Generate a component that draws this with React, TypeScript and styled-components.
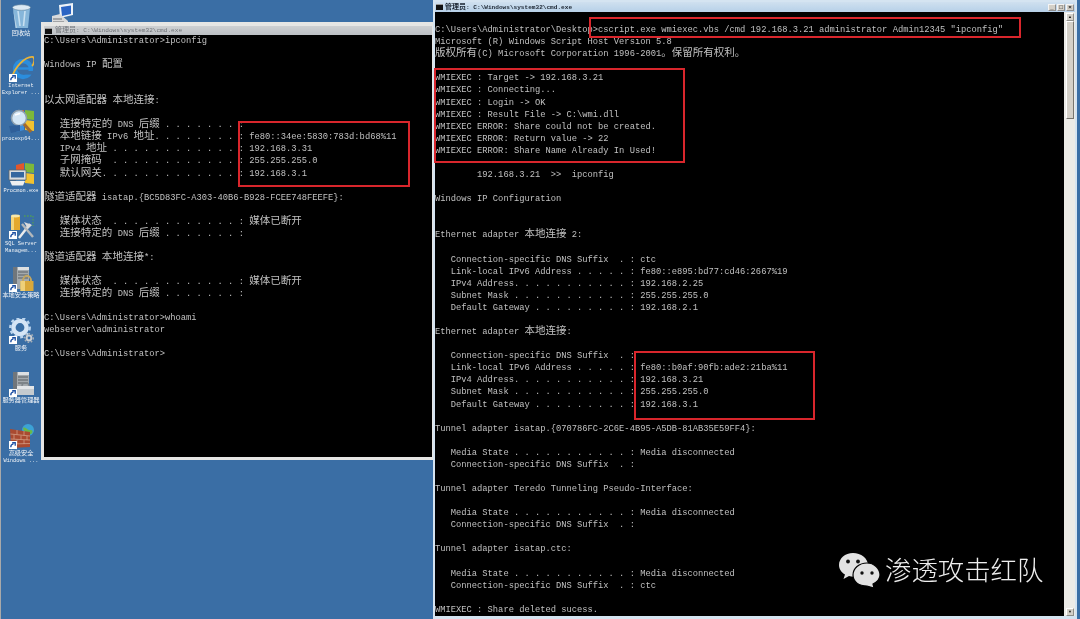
import React, { FunctionComponent, ReactNode } from 'react'
import styled, { createGlobalStyle } from 'styled-components'

const GlobalStyle = createGlobalStyle`
  html, body {
    margin: 0;
    padding: 0;
    background: #3a6ea5;
  }
`

const Desktop = styled.div`
  position: relative;
  width: 1080px;
  height: 619px;
  overflow: hidden;
  background: #3a6ea5;
  border-left: 1px solid #a9a9a9;
  box-sizing: border-box;
  filter: blur(0.3px);
`

const IconColumn = styled.div`
  display: grid;
  grid-auto-rows: 52.5px;
  width: 40px;
  padding-top: 3px;
`

const DesktopIcon = styled.div`
  display: flex;
  flex-direction: column;
  align-items: center;
`

const IconArt = styled.div`
  position: relative;
  width: 26px;
  height: 26px;
  margin-bottom: 1.5px;
`

const ShortcutBadge = styled.svg`
  position: absolute;
  left: 1px;
  bottom: 0;
  width: 8px;
  height: 8px;
`

const IconLabel = styled.div`
  height: 7px;
  color: #f2f5f8;
  font-family: 'Liberation Mono', 'Noto Sans CJK SC', monospace;
  font-size: 5.3px;
  line-height: 7px;
  text-align: center;
  white-space: pre;
`

// the cjk spans keep a small line-height so they do not push the baseline of their row
const LabelCjk = styled.span`
  display: inline-block;
  font-family: 'Noto Sans CJK SC', sans-serif;
  font-size: 6.2px;
  line-height: 4.4px;
`

const PeekIcon = styled.svg`
  position: absolute;
  left: 49px;
  top: 3px;
  width: 24px;
  height: 22px;
`

const Window = styled.div<{ $x: number; $y: number; $w: number; $h: number; $active?: boolean }>`
  position: absolute;
  left: ${(p) => p.$x}px;
  top: ${(p) => p.$y}px;
  width: ${(p) => p.$w}px;
  height: ${(p) => p.$h}px;
  box-sizing: border-box;
  display: flex;
  flex-direction: column;
  padding: ${(p) => (p.$active ? '2px 2px 3px 2px' : '4px 2px 3px 3px')};
  background: ${(p) => (p.$active ? '#d5e4f1' : '#e6e6e4')};
`

const TitleBar = styled.div<{ $active?: boolean }>`
  display: flex;
  align-items: center;
  gap: ${(p) => (p.$active ? 2 : 3)}px;
  flex: none;
  height: ${(p) => (p.$active ? 10 : 9)}px;
  padding-left: 1px;
  background: ${(p) =>
    p.$active ? 'linear-gradient(#cfe0ef, #b7d0e8)' : 'linear-gradient(#ced0d2, #bcc0c4)'};
  color: ${(p) => (p.$active ? '#1a2430' : '#6f7378')};
  font-family: 'Liberation Mono', 'Noto Sans CJK SC', monospace;
  font-size: 6.1px;
  font-weight: ${(p) => (p.$active ? 700 : 400)};
  white-space: pre;
`

const TitleCjk = styled.span`
  display: inline-block;
  font-family: 'Noto Sans CJK SC', sans-serif;
  font-size: 7px;
  line-height: 4.1px;
`

const CmdGlyph = styled.span`
  display: inline-block;
  flex: none;
  width: 7px;
  height: 6px;
  background: #111;
  border-top: 1px solid #999;
  box-sizing: border-box;
`

const Controls = styled.div`
  display: flex;
  gap: 1px;
  margin-left: auto;
  margin-right: 1px;
`

const ControlButton = styled.div`
  display: flex;
  align-items: center;
  justify-content: center;
  width: 8px;
  height: 7px;
  background: #d4d0c8;
  border: 1px solid #8d8d8d;
  border-top-color: #f4f4f4;
  border-left-color: #f4f4f4;
  box-sizing: border-box;
  color: #111;
  font-family: 'Liberation Sans', sans-serif;
  font-size: 6px;
  line-height: 1;
`

const WindowBody = styled.div`
  display: flex;
  flex: 1;
  min-height: 0;
  background: #000;
`

const Console = styled.div<{ $pitch: number }>`
  flex: 1;
  min-width: 0;
  overflow: hidden;
  color: #c0c0c0;
  font-family: 'Liberation Mono', monospace;
  font-size: 8.77px;

  > div {
    height: ${(p) => p.$pitch}px;
    line-height: ${(p) => p.$pitch}px;
    white-space: pre;
  }
`

const Wide = styled.span`
  display: inline-block;
  font-family: 'Noto Sans CJK SC', sans-serif;
  font-size: 10.52px;
  line-height: 8.6px;
`

const Scrollbar = styled.div`
  display: flex;
  flex-direction: column;
  flex: none;
  width: 11px;
  padding: 1px 1px 0 2px;
  box-sizing: border-box;
  background: #ecebe7;
`

const ScrollButton = styled.div`
  display: flex;
  align-items: center;
  justify-content: center;
  flex: none;
  height: 8px;
  background: #d4d0c8;
  border: 1px solid #8e8e8a;
  border-top-color: #fff;
  border-left-color: #fff;
  box-sizing: border-box;
  color: #111;
  font-size: 4px;
  line-height: 1;
`

const ScrollThumb = styled(ScrollButton)`
  height: 98px;
  border-bottom-color: #77756f;
  border-right-color: #77756f;
`

const ScrollTrack = styled.div`
  flex: 1;
`

const RedBox = styled.div<{ $x: number; $y: number; $w: number; $h: number }>`
  position: absolute;
  left: ${(p) => p.$x}px;
  top: ${(p) => p.$y}px;
  width: ${(p) => p.$w}px;
  height: ${(p) => p.$h}px;
  box-sizing: border-box;
  border: 2px solid #d9262c;
`

const Watermark = styled.div`
  position: absolute;
  left: 837px;
  top: 549px;
  display: flex;
  align-items: center;
  gap: 4px;
  color: #eeeeee;
  font-family: 'Noto Sans CJK SC', sans-serif;
  font-size: 26.4px;
  font-weight: 300;
  line-height: 40px;
  white-space: pre;
`

const WeChatMark = styled.svg`
  width: 43px;
  height: 37px;
  flex: none;
`

const CJK = /([\u3000-\u9fff\uff00-\uffef]+)/

const splitWide = (text: string, Tag: typeof Wide | typeof LabelCjk | typeof TitleCjk): ReactNode[] =>
  text.split(CJK).map((part, i) => (CJK.test(part) ? <Tag key={i}>{part}</Tag> : part))

const leftLines = [
  'C:\\Users\\Administrator>ipconfig',
  '',
  'Windows IP 配置',
  '',
  '',
  '以太网适配器 本地连接:',
  '',
  '   连接特定的 DNS 后缀 . . . . . . . :',
  '   本地链接 IPv6 地址. . . . . . . . : fe80::34ee:5830:783d:bd68%11',
  '   IPv4 地址 . . . . . . . . . . . . : 192.168.3.31',
  '   子网掩码  . . . . . . . . . . . . : 255.255.255.0',
  '   默认网关. . . . . . . . . . . . . : 192.168.3.1',
  '',
  '隧道适配器 isatap.{BC5D83FC-A303-40B6-B928-FCEE748FEEFE}:',
  '',
  '   媒体状态  . . . . . . . . . . . . : 媒体已断开',
  '   连接特定的 DNS 后缀 . . . . . . . :',
  '',
  '隧道适配器 本地连接*:',
  '',
  '   媒体状态  . . . . . . . . . . . . : 媒体已断开',
  '   连接特定的 DNS 后缀 . . . . . . . :',
  '',
  'C:\\Users\\Administrator>whoami',
  'webserver\\administrator',
  '',
  'C:\\Users\\Administrator>',
]

const rightLines = [
  '',
  'C:\\Users\\Administrator\\Desktop>cscript.exe wmiexec.vbs /cmd 192.168.3.21 administrator Admin12345 "ipconfig"',
  'Microsoft (R) Windows Script Host Version 5.8',
  '版权所有(C) Microsoft Corporation 1996-2001。保留所有权利。',
  '',
  'WMIEXEC : Target -> 192.168.3.21',
  'WMIEXEC : Connecting...',
  'WMIEXEC : Login -> OK',
  'WMIEXEC : Result File -> C:\\wmi.dll',
  'WMIEXEC ERROR: Share could not be created.',
  'WMIEXEC ERROR: Return value -> 22',
  'WMIEXEC ERROR: Share Name Already In Used!',
  '',
  '        192.168.3.21  >>  ipconfig',
  '',
  'Windows IP Configuration',
  '',
  '',
  'Ethernet adapter 本地连接 2:',
  '',
  '   Connection-specific DNS Suffix  . : ctc',
  '   Link-local IPv6 Address . . . . . : fe80::e895:bd77:cd46:2667%19',
  '   IPv4 Address. . . . . . . . . . . : 192.168.2.25',
  '   Subnet Mask . . . . . . . . . . . : 255.255.255.0',
  '   Default Gateway . . . . . . . . . : 192.168.2.1',
  '',
  'Ethernet adapter 本地连接:',
  '',
  '   Connection-specific DNS Suffix  . :',
  '   Link-local IPv6 Address . . . . . : fe80::b0af:90fb:ade2:21ba%11',
  '   IPv4 Address. . . . . . . . . . . : 192.168.3.21',
  '   Subnet Mask . . . . . . . . . . . : 255.255.255.0',
  '   Default Gateway . . . . . . . . . : 192.168.3.1',
  '',
  'Tunnel adapter isatap.{070786FC-2C6E-4B95-A5DB-81AB35E59FF4}:',
  '',
  '   Media State . . . . . . . . . . . : Media disconnected',
  '   Connection-specific DNS Suffix  . :',
  '',
  'Tunnel adapter Teredo Tunneling Pseudo-Interface:',
  '',
  '   Media State . . . . . . . . . . . : Media disconnected',
  '   Connection-specific DNS Suffix  . :',
  '',
  'Tunnel adapter isatap.ctc:',
  '',
  '   Media State . . . . . . . . . . . : Media disconnected',
  '   Connection-specific DNS Suffix  . : ctc',
  '',
  'WMIEXEC : Share deleted sucess.',
]

// windows flag pieces, shared by the two sysinternals icons
const Flag = () => (
  <g>
    <path d="M8 4 L16 2 L16 11 L8 12 Z" fill="#e2572b" />
    <path d="M17 2 L26 3 L26 12 L17 11 Z" fill="#7db83a" />
    <path d="M8 13 L16 12 L16 22 L8 24 Z" fill="#3f8fdd" />
    <path d="M17 12 L26 13 L26 23 L17 22 Z" fill="#f2c230" />
  </g>
)

const Tower = () => (
  <g>
    <path d="M5 1 L21 1 L21 23 L5 23 Z" fill="#a3a9ad" />
    <path d="M5 1 L9 1 L9 23 L5 23 Z" fill="#70767b" />
    <path d="M10 1 L21 1 L21 4 L10 4 Z" fill="#dde0e2" />
    <path d="M10 6 H20 M10 9 H20 M10 12 H20" stroke="#5b6065" strokeWidth="1.2" />
  </g>
)

const artwork: Record<string, ReactNode> = {
  recycle: (
    <g>
      <path d="M5 5 L22 5 L20 25 L8 25 Z" fill="#86b6da" />
      <path d="M10 8 L12 23 M17 8 L15.5 23" stroke="#c7e0f1" strokeWidth="1.6" />
      <path d="M5 5 L9 25 L7.5 25 Z" fill="#b6d2e6" />
      <ellipse cx="13.5" cy="4.5" rx="9" ry="2.8" fill="#dbe9f3" stroke="#6d8ba3" strokeWidth=".6" />
    </g>
  ),
  ie: (
    <g>
      <circle cx="15" cy="13" r="8" fill="none" stroke="#2b8ddd" strokeWidth="4.4" />
      <path d="M8 12.5 H23" stroke="#2b8ddd" strokeWidth="2.4" />
      <path d="M15 15 H25.5 V18.6 H15 Z" fill="#3a6ea5" />
      <path d="M4 22 C6 12 17 0 25 1 C27.5 3 26 8 24 10" fill="none" stroke="#e8b33a" strokeWidth="1.8" />
    </g>
  ),
  procexp: (
    <g>
      <Flag />
      <circle cx="11" cy="10" r="7.5" fill="#d3e6f5" stroke="#8fa0ae" strokeWidth="1.6" />
      <path d="M7 7 L12 5.5" stroke="#fff" strokeWidth="1.8" />
      <path d="M16 16 L23 24" stroke="#a36a2d" strokeWidth="3.2" />
      <path d="M1 18 L12 17 L12 23 L3 25 Z" fill="#2f5f99" />
    </g>
  ),
  procmon: (
    <g>
      <Flag />
      <path d="M1 9 L18 9 L18 19 L1 19 Z" fill="#d9dde0" stroke="#5f6468" strokeWidth=".8" />
      <path d="M3 11 L16 11 L16 16.5 L3 16.5 Z" fill="#35679f" />
      <path d="M2 20 L17 20 L15 24.5 L4 24.5 Z" fill="#eef0f0" />
    </g>
  ),
  sql: (
    <g>
      <path d="M3 3 H12 V17 H3 Z" fill="#e5a92c" />
      <path d="M3 3 H6 V17 H3 Z" fill="#f4d57a" />
      <ellipse cx="7.5" cy="3" rx="4.5" ry="1.4" fill="#f8e7a8" />
      <path d="M16 3 H25 M25 3 V13" stroke="#4f9a5a" strokeWidth="1.3" strokeDasharray="1.6 1.4" />
      <path d="M11 25 L22 11" stroke="#ececec" strokeWidth="2.4" />
      <path d="M14 11 L25 24" stroke="#b4b8bb" strokeWidth="2.4" />
      <path d="M16 9 L24 12 L20 16 Z" fill="#dcdcdc" />
    </g>
  ),
  security: (
    <g>
      <Tower />
      <path d="M15 15 C15 8 23 8 23 15" fill="none" stroke="#c2a661" strokeWidth="1.9" />
      <path d="M12.5 15 H25.5 V25 H12.5 Z" fill="#d9a83a" />
      <path d="M12.5 15 H17 V25 H12.5 Z" fill="#efd078" />
    </g>
  ),
  services: (
    <g>
      <circle cx="12" cy="9.5" r="6.6" fill="none" stroke="#d6e5f5" strokeWidth="4.4" />
      <circle cx="12" cy="9.5" r="9.6" fill="none" stroke="#bcd5ee" strokeWidth="2.6" strokeDasharray="3 2.9" />
      <circle cx="21" cy="20" r="2.4" fill="none" stroke="#c9ced4" strokeWidth="2" />
      <circle cx="21" cy="20" r="4.3" fill="none" stroke="#a3adb6" strokeWidth="1.6" strokeDasharray="1.6 1.6" />
    </g>
  ),
  manager: (
    <g>
      <Tower />
      <path d="M9 15 H26 V24 H9 Z" fill="#c5cbcf" />
      <path d="M9 15 H26 V18 H9 Z" fill="#e3e6e8" />
      <path d="M14 15 C14 11 21 11 21 15" fill="none" stroke="#7d8489" strokeWidth="1.4" />
    </g>
  ),
  firewall: (
    <g>
      <circle cx="20" cy="7" r="6" fill="#3ca2d6" />
      <path d="M15 5 C18 3 19 8 23 7 C25 7 25 10 23 11 C20 12 16 10 15 5" fill="#69b84a" />
      <path d="M2 6 L22 9 L22 24 L3 25 Z" fill="#a94a30" />
      <path d="M2.5 11 L22 13 M2.7 16 L22 17 M3 21 L22 20.5 M9 7 V11.5 M16 8 V12.5 M6 11.5 V16 M13 12.5 V16.5 M19 13 V17 M9 16.5 V21 M16 17 V21" stroke="#d9a88f" strokeWidth=".7" />
    </g>
  ),
}

const desktopIcons: { art: string; label: string[]; shortcut?: boolean }[] = [
  { art: 'recycle', label: ['回收站'] },
  { art: 'ie', label: ['Internet', 'Explorer ...'], shortcut: true },
  { art: 'procexp', label: ['procexp64...'] },
  { art: 'procmon', label: ['Procmon.exe'] },
  { art: 'sql', label: ['SQL Server', 'Managem...'], shortcut: true },
  { art: 'security', label: ['本地安全策略'], shortcut: true },
  { art: 'services', label: ['服务'], shortcut: true },
  { art: 'manager', label: ['服务器管理器'], shortcut: true },
  { art: 'firewall', label: ['高级安全', 'Windows ...'], shortcut: true },
]

const Shortcut = () => (
  <ShortcutBadge viewBox="0 0 9 9">
    <rect width="9" height="9" fill="#fff" />
    <path d="M2 7 C2 4 3.5 3.5 5 3.5 M3.6 2 H7 V5.4" fill="none" stroke="#1d4fa3" strokeWidth="1.5" />
  </ShortcutBadge>
)

const TerminalWindow: FunctionComponent<{
  lines: string[]
  pitch: number
  active?: boolean
  x: number
  y: number
  w: number
  h: number
  scrollbar?: boolean
}> = ({ lines, pitch, active, x, y, w, h, scrollbar }) => (
  <Window $x={x} $y={y} $w={w} $h={h} $active={active}>
    <TitleBar $active={active}>
      <CmdGlyph />
      <span>{splitWide('管理员: C:\\Windows\\system32\\cmd.exe', TitleCjk)}</span>
      {active && (
        <Controls>
          <ControlButton>_</ControlButton>
          <ControlButton>□</ControlButton>
          <ControlButton>×</ControlButton>
        </Controls>
      )}
    </TitleBar>
    <WindowBody>
      <Console $pitch={pitch}>
        {lines.map((line, i) => (
          <div key={i}>{splitWide(line, Wide)}</div>
        ))}
      </Console>
      {scrollbar && (
        <Scrollbar>
          <ScrollButton>▲</ScrollButton>
          <ScrollThumb />
          <ScrollTrack />
          <ScrollButton>▼</ScrollButton>
        </Scrollbar>
      )}
    </WindowBody>
  </Window>
)

export default function App() {
  return (
    <>
      <GlobalStyle />
      <Desktop>
        <IconColumn>
          {desktopIcons.map((icon) => (
            <DesktopIcon key={icon.art}>
              <IconArt>
                <svg viewBox="0 0 26 26" width="26" height="26">
                  {artwork[icon.art]}
                </svg>
                {icon.shortcut && <Shortcut />}
              </IconArt>
              {icon.label.map((text) => (
                <IconLabel key={text}>{splitWide(text, LabelCjk)}</IconLabel>
              ))}
            </DesktopIcon>
          ))}
        </IconColumn>
        <PeekIcon viewBox="0 0 24 22">
          <path d="M9 2 L23 0 L23 12 L10 15 Z" fill="#eef3f8" />
          <path d="M11 4 L21 2.5 L21 11 L12 13 Z" fill="#2a64c4" />
          <path d="M2 13 L10 11 L18 18 L18 22 L2 22 Z" fill="#d9dadb" />
          <path d="M3 16 H12 M3 19 H14" stroke="#8e9194" strokeWidth="1.4" />
        </PeekIcon>
        <TerminalWindow lines={leftLines} pitch={12.05} x={40} y={22} w={393} h={438} />
        <TerminalWindow lines={rightLines} pitch={12.08} active scrollbar x={432} y={0} w={644} h={619} />
        <RedBox $x={237} $y={121} $w={172} $h={66} />
        <RedBox $x={588} $y={17} $w={432} $h={21} />
        <RedBox $x={433} $y={68} $w={251} $h={95} />
        <RedBox $x={633} $y={351} $w={181} $h={69} />
        <Watermark>
          <WeChatMark viewBox="0 0 43 37">
            <path d="M15 2 C7 2 1 7.5 1 14 C1 18 3.5 21.5 7 23.5 L5.5 28 L11 25 C12.5 25.5 14 25.7 15.5 25.7 C24 25.7 30 20 30 14 C30 7.5 23 2 15 2 Z" fill="#e2e2e2" />
            <path d="M29 12 C21 12 15 17.5 15 24 C15 31 21 35 29 35 L36 37 L35 33 C39 31 42 28 42 24 C42 17.5 36 12 29 12 Z" fill="#e2e2e2" stroke="#000" strokeWidth="1.2" />
            <circle cx="10" cy="10.5" r="1.9" fill="#111" />
            <circle cx="20" cy="10.5" r="1.9" fill="#111" />
            <circle cx="24" cy="22" r="1.7" fill="#111" />
            <circle cx="34" cy="22" r="1.7" fill="#111" />
          </WeChatMark>
          <span>渗透攻击红队</span>
        </Watermark>
      </Desktop>
    </>
  )
}
